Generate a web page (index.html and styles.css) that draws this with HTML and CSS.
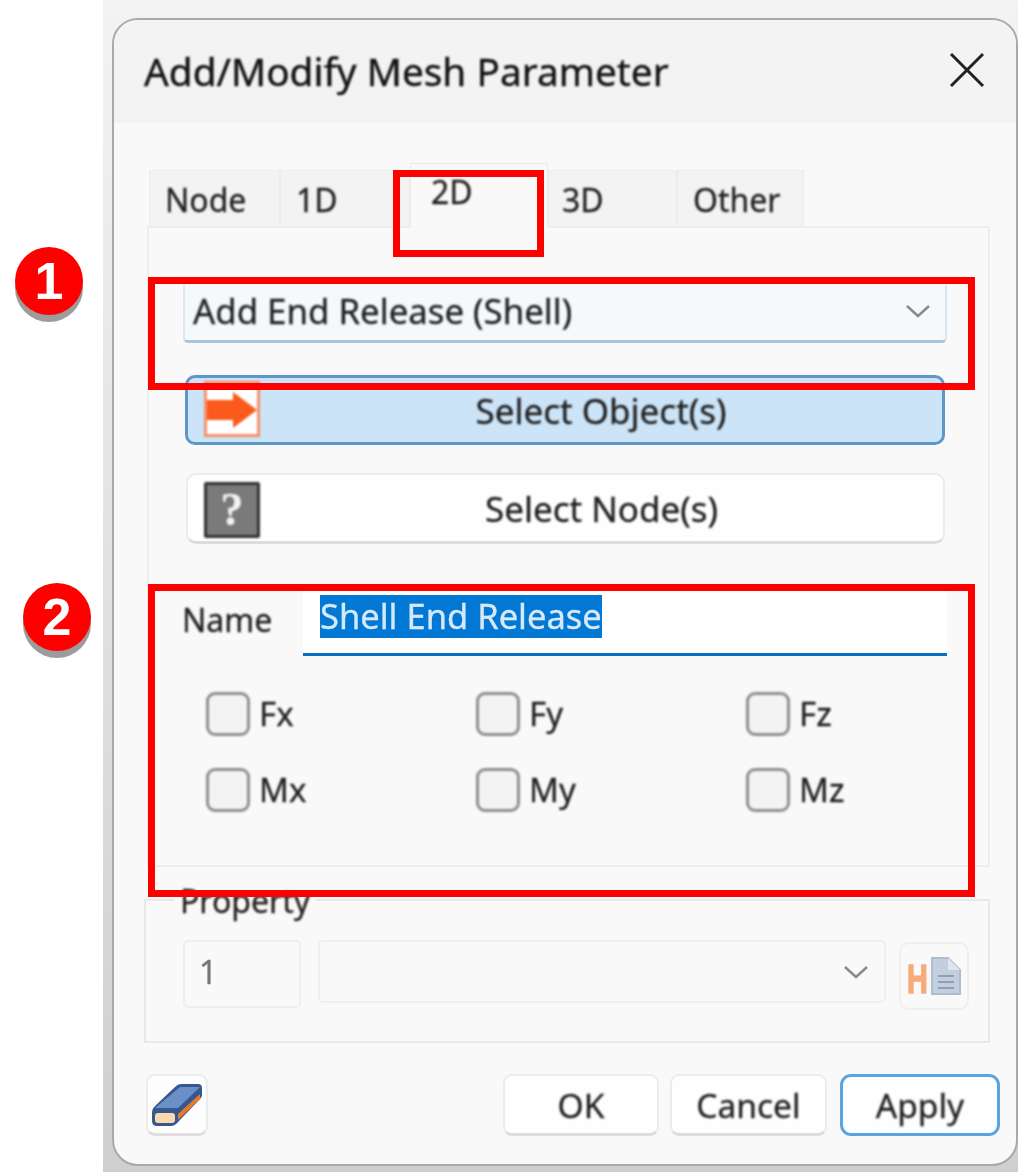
FILE: index.html
```html
<!DOCTYPE html>
<html lang="en">
<head>
    <meta charset="UTF-8">
    <title>Add/Modify Mesh Parameter</title>
    <link rel="stylesheet" href="styles.css">
</head>
<body>
<div class="page">

    <div class="window">
        <div class="titlebar">
            <span class="title">Add/Modify Mesh Parameter</span>
            <svg class="close" width="36" height="36" viewBox="0 0 36 36"><path d="M2 2L34 34M34 2L2 34"/></svg>
        </div>

        <div class="content">
            <div class="tabs">
                <div class="tab tab-node"><span>Node</span></div>
                <div class="tab tab-1d"><span>1D</span></div>
                <div class="tab tab-active"><span>2D</span></div>
                <div class="tab tab-3d"><span>3D</span></div>
                <div class="tab tab-other"><span>Other</span></div>
            </div>

            <div class="panel">
                <div class="combo">
                    <span>Add End Release (Shell)</span>
                    <svg class="chevron" width="26" height="14" viewBox="0 0 26 14"><path d="M2 2L13 12L24 2"/></svg>
                </div>

                <div class="wide-btn wide-btn-on">
                    <svg class="btn-icon" width="56" height="56" viewBox="0 0 56 56">
                        <rect x="1.5" y="1.5" width="53" height="53" fill="#fff" stroke="#f7906a" stroke-width="3"/>
                        <path d="M3 19H29V11L53 29L29 47V39H3Z" fill="#fb5a1c"/>
                    </svg>
                    <span>Select Object(s)</span>
                </div>

                <div class="wide-btn">
                    <div class="help-icon">?</div>
                    <span>Select Node(s)</span>
                </div>

                <div class="name-row">
                    <span class="name-label">Name</span>
                    <div class="name-input"><span class="selected">Shell End Release</span></div>
                </div>

                <div class="checks">
                    <label class="check"><i></i>Fx</label>
                    <label class="check"><i></i>Fy</label>
                    <label class="check"><i></i>Fz</label>
                    <label class="check"><i></i>Mx</label>
                    <label class="check"><i></i>My</label>
                    <label class="check"><i></i>Mz</label>
                </div>
            </div>

            <div class="group">
                <div class="legend">Property</div>
                <div class="group-row">
                    <div class="num-input">1</div>
                    <div class="dim-combo">
                        <svg class="chevron" width="26" height="14" viewBox="0 0 26 14"><path d="M2 2L13 12L24 2"/></svg>
                    </div>
                    <div class="doc-btn">
                        <svg width="54" height="56" viewBox="0 0 54 56">
                            <text x="0" y="45" class="doc-h" transform="scale(.72 1)">H</text>
                            <path d="M25 10H41L53 22V46H25Z" fill="#c3cfdf" stroke="#aebcd0" stroke-width="2"/>
                            <path d="M41 10V22H53" fill="#dfe5ee"/>
                            <path d="M31 28H47M31 34H47M31 40H47" stroke="#8e9fb6" stroke-width="2"/>
                        </svg>
                    </div>
                </div>
            </div>

            <div class="footer">
                <div class="eraser-btn">
                    <svg width="52" height="46" viewBox="0 0 52 46">
                        <path d="M1 30Q1 27 4 24L24 5Q27 2 30 2H47Q51 2 51 6V13Q51 15 49 17L28 39Q24 44 20 44H6Q1 44 1 39Z" fill="#34588f"/>
                        <path d="M4 26L29 5H49L27 26Z" fill="#6b90c8"/>
                        <path d="M27 32L49 12V17L27 38Z" fill="#e9782a"/>
                        <rect x="4" y="31" width="20" height="10" rx="3" fill="#fbd8ad"/>
                    </svg>
                </div>
                <div class="actions">
                    <div class="action action-ok"><span>OK</span></div>
                    <div class="action action-cancel"><span>Cancel</span></div>
                    <div class="action action-apply"><span>Apply</span></div>
                </div>
            </div>
        </div>
    </div>

    <!-- callouts -->
    <div class="mark mark-tab"></div>
    <div class="mark mark-one"></div>
    <div class="mark mark-two"></div>
    <div class="badge badge-one">1</div>
    <div class="badge badge-two">2</div>
</div>
</body>
</html>
```

FILE: styles.css
```css
* { box-sizing: border-box; }
html, body { margin: 0; background: #fff; }
.page {
    position: relative;
    width: 1018px;
    height: 1172px;
    overflow: hidden;
    padding: 18px 0 6px 112px;
    font-family: "Noto Sans", "Open Sans", sans-serif;
    color: #1f1f1f;
    background: linear-gradient(#f3f3f3, #cfcfcf) 103px 0 / 915px 100% no-repeat;
}
.window {
    height: 100%;
    display: flex;
    flex-direction: column;
    border: 2px solid #a9a9a9;
    border-radius: 26px;
    background: #f9f9f9;
    overflow: hidden;
}
.titlebar {
    height: 103px;
    flex: none;
    display: flex;
    align-items: center;
    justify-content: space-between;
    padding: 0 31px 0 30px;
    background: #f3f3f3;
}
.title { font-size: 38.8px; margin-top: -2px; filter: blur(.9px); color: #111; -webkit-text-stroke: .4px #111; }
.close { margin-top: -4px; }
.close path { fill: none; stroke: #222; stroke-width: 3; }

.content {
    padding: 40px 26px 0 33px;
    font-size: 32px;
    -webkit-text-stroke: .3px;
}
.tabs { display: flex; align-items: flex-end; margin-left: 2px; height: 63px; }
.tab {
    height: 56px;
    padding: 7px 0 0 15px;
    background: #f3f3f3;
    border: 1px solid #ececec;
    border-bottom: 0;
}
.tab span, .action span { display: block; filter: blur(.8px); }
.tab-node { width: 131px; }
.tab-1d { width: 130px; }
.tab-active {
    width: 138px;
    height: 65px;
    margin-bottom: -2px;
    padding: 6px 0 0 20px;
    background: #f9f9f9;
    position: relative;
}
.tab-3d { width: 129px; padding-left: 13px; }
.tab-other { width: 127px; }

.panel {
    border: 2px solid #eeeeee;
    height: 641px;
    padding: 57px 41px 0 34px;
}
.combo {
    height: 58px;
    display: flex;
    align-items: center;
    justify-content: space-between;
    padding: 0 14px 4px 8px;
    background: #f5f9fc;
    border: 2px solid #dbe6f0;
    border-bottom: 3px solid #a9c5dd;
    border-top: 0;
    border-radius: 0 0 5px 5px;
    font-size: 34.8px;
}
.combo span { filter: blur(.9px); }
.chevron path { fill: none; stroke: #8a8a8a; stroke-width: 2.5; }

.wide-btn {
    position: relative;
    height: 71px;
    margin: 28px 2px 0 3px;
    padding-left: 72px;
    display: flex;
    align-items: center;
    justify-content: center;
    background: #fefefe;
    border: 2px solid #ececec;
    border-bottom: 3px solid #dcdcdc;
    border-radius: 10px;
    font-size: 35px;
}
.wide-btn span { filter: blur(.9px); }
.wide-btn-on {
    height: 70px;
    margin: 32px 2px 0 2px;
    background: #cce4f7;
    border: 3px solid #5f97c6;
}
.btn-icon { position: absolute; left: 16px; top: 3px; filter: blur(.8px); }
.help-icon {
    position: absolute;
    left: 16px;
    top: 7px;
    width: 56px;
    height: 56px;
    background: #7a7a7a;
    border: 3px solid #333;
    border-radius: 2px;
    color: #f2f2f2;
    text-align: center;
    font: bold 46px/50px "Liberation Serif", serif;
    filter: blur(.8px);
}

.name-row { display: flex; align-items: flex-start; margin-top: 46px; height: 66px; }
.name-label { width: 121px; margin-left: -1px; padding-top: 8px; filter: blur(.9px); }
.name-input {
    flex: 1;
    height: 66px;
    padding: 5px 0 0 17px;
    background: #fff;
    border-bottom: 3px solid #0a6fc4;
}
.selected {
    display: inline-block;
    height: 43px;
    line-height: 42px;
    background: #0078d4;
    color: #d7e9f8;
    font-size: 34.5px;
    filter: blur(.7px);
}
.checks {
    display: grid;
    grid-template-columns: 270px 270px 1fr;
    row-gap: 33px;
    margin: 36px 0 0 23px;
    font-size: 33px;
}
.check { display: flex; align-items: center; gap: 9px; height: 43px; filter: blur(.8px); }
.check i {
    width: 44px;
    height: 44px;
    background: #f3f3f3;
    border: 3px solid #8e8e8e;
    border-radius: 9px;
}

.group {
    position: relative;
    height: 144px;
    margin: 32px 0 0 -3px;
    border: 2px solid #e8e8e8;
    padding: 0 0 0 37px;
}
.legend {
    width: fit-content;
    height: 40px;
    margin: -20px 0 0 -9px;
    padding: 0 6px;
    background: #f9f9f9;
    line-height: 40px;
    filter: blur(.9px);
}
.group-row { display: flex; align-items: flex-start; margin-top: 19px; gap: 17px; }
.num-input {
    width: 118px;
    height: 68px;
    padding: 8px 0 0 14px;
    border: 2px solid #efefef;
    border-radius: 5px;
    color: #777;
    filter: blur(.6px);
}
.dim-combo {
    width: 568px;
    height: 63px;
    display: flex;
    align-items: center;
    justify-content: flex-end;
    padding: 0 15px 0 0;
    border: 2px solid #efefef;
    border-radius: 5px;
}
.doc-btn {
    width: 70px;
    height: 68px;
    margin: 2px 0 0 -4px;
    display: flex;
    align-items: center;
    justify-content: center;
    border: 2px solid #efefef;
    border-radius: 10px;
    filter: blur(.6px);
}
.doc-h { font: bold 40px "Liberation Sans", sans-serif; fill: #f7ab78; stroke: #f7ab78; stroke-width: 1.5; }

.footer { display: flex; justify-content: space-between; margin: 31px -10px 0 -1px; }
.eraser-btn {
    width: 62px;
    height: 62px;
    display: flex;
    align-items: center;
    justify-content: center;
    background: #fdfdfd;
    border: 2px solid #ececec;
    border-bottom: 3px solid #dedede;
    border-radius: 9px;
}
.eraser-btn svg { filter: blur(.7px); }
.actions { display: flex; }
.action {
    height: 62px;
    display: flex;
    align-items: center;
    justify-content: center;
    background: #fefefe;
    border: 2px solid #ececec;
    border-bottom: 3px solid #dcdcdc;
    border-radius: 9px;
    font-size: 33.5px;
}
.action-ok { width: 156px; }
.action-cancel { width: 157px; margin-left: 11px; }
.action-apply {
    width: 160px;
    margin-left: 13px;
    border: 3px solid #5aa5e0;
    border-radius: 11px;
}

.mark { position: absolute; border: 7px solid #f00; }
.mark-tab { left: 393px; top: 170px; width: 151px; height: 87px; }
.mark-one { left: 148px; top: 277px; width: 827px; height: 113px; }
.mark-two { left: 148px; top: 584px; width: 827px; height: 313px; }

.badge {
    position: absolute;
    width: 68px;
    height: 68px;
    border-radius: 50%;
    background: #f00;
    box-shadow: 0 7px 0 #9c9c9c;
    color: #fff;
    text-align: center;
    font: bold 52px/68px "Liberation Sans", sans-serif;
}
.badge-one { left: 15px; top: 247px; }
.badge-two { left: 23px; top: 583px; }
```
